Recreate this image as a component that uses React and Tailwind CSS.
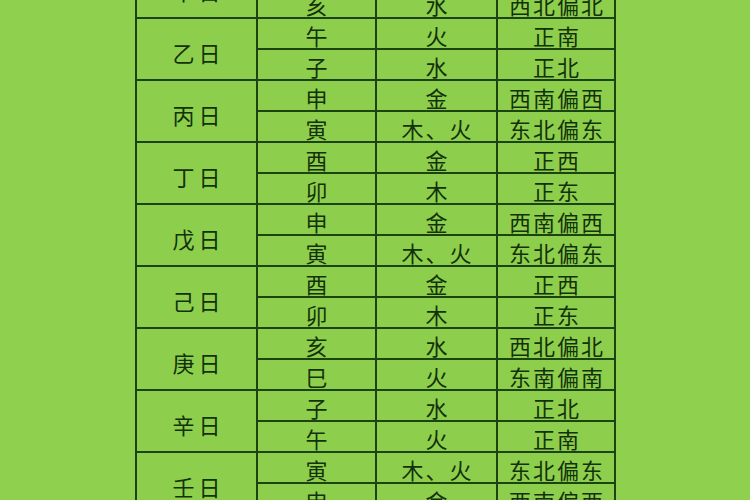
import React from "react";

const days = [
  { day: "甲日", rows: [["丑", "土", "东北偏北"], ["亥", "水", "西北偏北"]] },
  { day: "乙日", rows: [["午", "火", "正南"], ["子", "水", "正北"]] },
  { day: "丙日", rows: [["申", "金", "西南偏西"], ["寅", "木、火", "东北偏东"]] },
  { day: "丁日", rows: [["酉", "金", "正西"], ["卯", "木", "正东"]] },
  { day: "戊日", rows: [["申", "金", "西南偏西"], ["寅", "木、火", "东北偏东"]] },
  { day: "己日", rows: [["酉", "金", "正西"], ["卯", "木", "正东"]] },
  { day: "庚日", rows: [["亥", "水", "西北偏北"], ["巳", "火", "东南偏南"]] },
  { day: "辛日", rows: [["子", "水", "正北"], ["午", "火", "正南"]] },
  { day: "壬日", rows: [["寅", "木、火", "东北偏东"], ["申", "金", "西南偏西"]] },
];

const cell =
  "border-2 border-[#1c4312] text-center align-middle pt-[3px] pl-[2px] tracking-[2px]";

export default function App() {
  return (
    <div
      className="w-[750px] h-[500px] overflow-hidden bg-[#8fd14f] text-[#14320a] text-[22px] leading-none"
      style={{ fontFamily: '"Noto Sans CJK SC", "Noto Sans", sans-serif' }}
    >
      <table className="ml-[135px] mt-[-45px] w-[479px] border-collapse table-fixed bg-[#8dcf4d]">
        <colgroup>
          <col className="w-[121px]" />
          <col className="w-[119px]" />
          <col className="w-[121px]" />
          <col className="w-[118px]" />
        </colgroup>
        <tbody>
          {days.map((d) =>
            d.rows.map((r, i) => (
              <tr key={d.day + i} className="h-[31px]">
                {i === 0 && (
                  <td rowSpan={2} className={cell + " pt-[5px] tracking-[4px] pl-[4px]"}>
                    {d.day}
                  </td>
                )}
                <td className={cell}>{r[0]}</td>
                <td className={cell}>{r[1]}</td>
                <td className={cell}>{r[2]}</td>
              </tr>
            ))
          )}
        </tbody>
      </table>
    </div>
  );
}
